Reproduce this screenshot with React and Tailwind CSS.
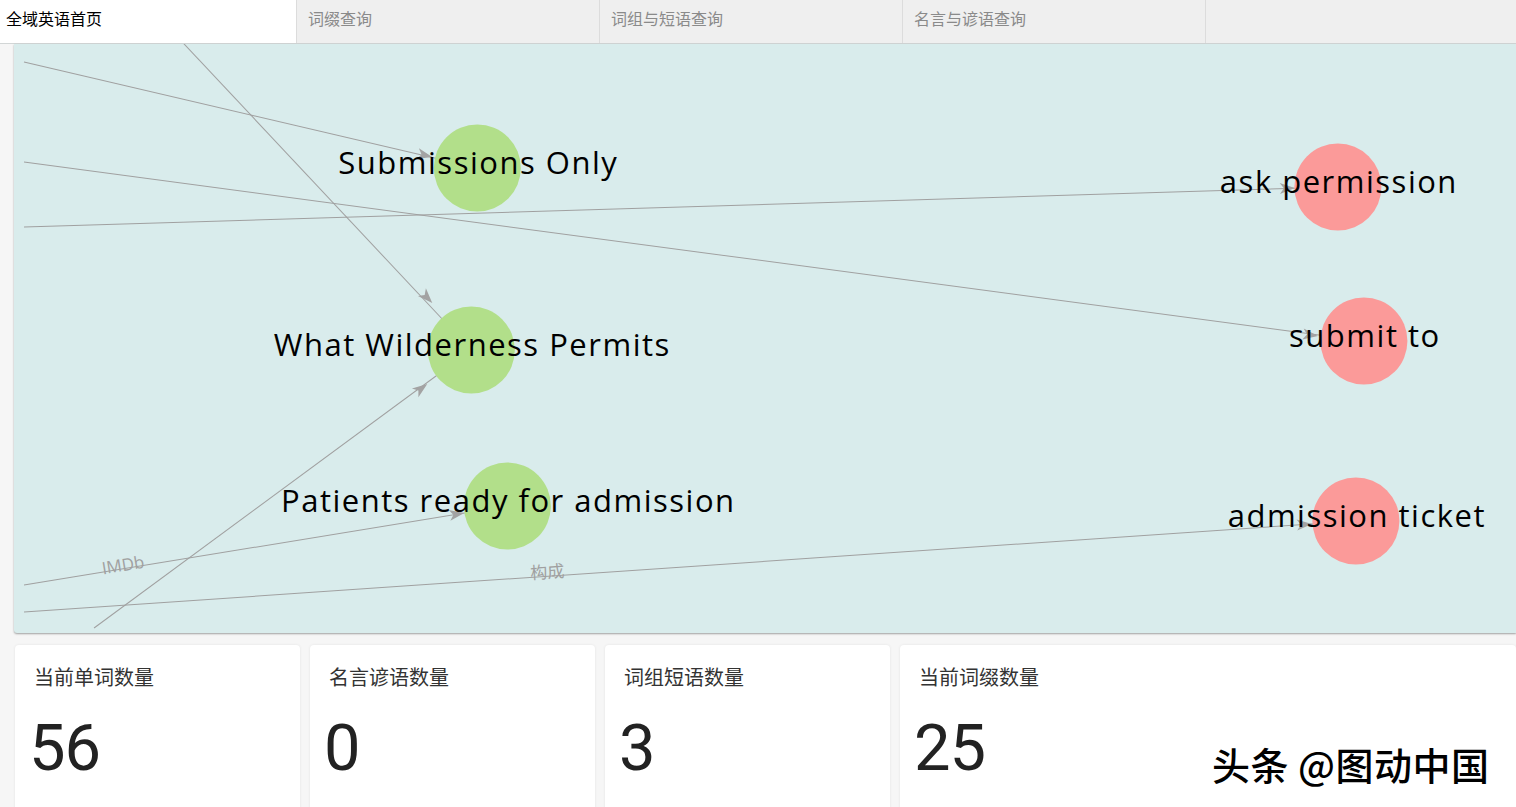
import React from 'react';

const tabs = ['全域英语首页', '词缀查询', '词组与短语查询', '名言与谚语查询'];

const nodes = [
    {label: 'Submissions Only', cx: 478, cy: 168, ty: 174, fill: '#b2df8a'},
    {label: 'What Wilderness Permits', cx: 472, cy: 350, ty: 356, fill: '#b2df8a'},
    {label: 'Patients ready for admission', cx: 508, cy: 506, ty: 512, fill: '#b2df8a'},
    {label: 'ask permission', cx: 1338, cy: 187, ty: 193, fill: '#fb9a99'},
    {label: 'submit to', cx: 1364, cy: 341, ty: 347, fill: '#fb9a99'},
    {label: 'admission ticket', cx: 1356, cy: 521, ty: 527, fill: '#fb9a99'},
];

// from -> arrow tip, line runs on to the node centre (hidden under the circle)
const edges = [
    {x1: 25, y1: 62, tx: 433, ty: 157, cx: 478, cy: 168},
    {x1: 140, y1: -4, tx: 433, ty: 303, cx: 472, cy: 350},
    {x1: 25, y1: 162, tx: 1318, ty: 336, cx: 1364, cy: 341},
    {x1: 25, y1: 227, tx: 1295, ty: 188, cx: 1338, cy: 187},
    {x1: 95, y1: 628, tx: 428, ty: 384, cx: 472, cy: 350},
    {x1: 25, y1: 585, tx: 465, ty: 513, cx: 508, cy: 506},
    {x1: 25, y1: 612, tx: 1312, ty: 524, cx: 1356, cy: 521},
];

const stats = [
    {title: '当前单词数量', value: '56'},
    {title: '名言谚语数量', value: '0'},
    {title: '词组短语数量', value: '3'},
    {title: '当前词缀数量', value: '25'},
];

const Arrow = ({edge}) => {
    const angle = Math.atan2(edge.ty - edge.y1, edge.tx - edge.x1) * 180 / Math.PI;
    return (
        <polygon
            points="0,0 -15,-5.5 -11,0 -15,5.5"
            fill="#a3a3a3"
            transform={`translate(${edge.tx} ${edge.ty}) rotate(${angle})`}
        />
    );
};

const Graph = () => (
    <svg className="w-full h-full block" viewBox="15 44 1501 589" preserveAspectRatio="none">
        {edges.map((e, i) => (
            <line key={i} x1={e.x1} y1={e.y1} x2={e.cx} y2={e.cy} stroke="#a0a0a0" strokeWidth="1" />
        ))}
        {edges.map((e, i) => <Arrow key={i} edge={e} />)}
        <text x="124" y="571" fill="#a0a0a0" fontSize="17" textAnchor="middle"
              fontFamily="'Open Sans', 'Noto Sans CJK SC', sans-serif"
              transform="rotate(-9.3 124 565)">IMDb</text>
        <text x="548" y="578" fill="#a0a0a0" fontSize="17" textAnchor="middle"
              fontFamily="'Noto Sans CJK SC', sans-serif"
              transform="rotate(-3.9 548 571)">构成</text>
        {nodes.map((n) => (
            <circle key={n.label} cx={n.cx} cy={n.cy} r="43.5" fill={n.fill} />
        ))}
        {nodes.map((n) => (
            <text key={n.label} x={n.cx + 1} y={n.ty} textAnchor="middle" fontSize="31" fill="#000"
                  letterSpacing="1.5" fontFamily="'Open Sans', sans-serif">{n.label}</text>
        ))}
    </svg>
);

export default function App() {
    return (
        <div className="relative h-[807px] overflow-hidden bg-[#f6f6f6] font-['Noto_Sans_CJK_SC',sans-serif]">
            <div className="flex h-[44px] bg-[#efefef] border-b border-[#d2d6d6]">
                {tabs.map((t, i) => (
                    <div
                        key={t}
                        className={i === 0
                            ? 'w-[297px] bg-white pl-[6px] pt-[7px] text-[16px] leading-[22px] text-black border-r border-[#dcdcdc]'
                            : 'w-[303px] pl-[11px] pt-[7px] text-[16px] leading-[22px] text-[#8a8a8a] border-r border-[#dcdcdc]'}
                    >
                        {t}
                    </div>
                ))}
            </div>

            <div className="pl-[14px]">
                <div className="h-[589px] bg-[#d9ecec] rounded-bl-[3px] shadow-[0_1px_2px_rgba(0,0,0,0.35)] overflow-hidden">
                    <Graph />
                </div>
            </div>

            <div className="flex gap-[10px] pl-[15px] mt-[12px]">
                {stats.map((s, i) => (
                    <div
                        key={s.title}
                        className={`${i === 3 ? 'flex-1' : 'w-[285px]'} h-[200px] bg-white rounded-[4px] shadow-[0_0_3px_rgba(0,0,0,0.08)] pl-[19px] pt-[20px]`}
                    >
                        <div className="text-[20px] leading-[24px] text-[#333]">{s.title}</div>
                        <div className="mt-[27px] font-['Roboto',sans-serif] text-[65px] leading-none text-[#222] -ml-[5px] tracking-[-1px]">
                            {s.value}
                        </div>
                    </div>
                ))}
            </div>

            <div
                className="absolute left-[1212px] top-[739px] text-[38px] leading-[50px] font-medium text-black font-['Noto_Sans_CJK_SC',sans-serif] tracking-[0.5px] [text-shadow:1px_1px_0_#fff,-1px_-1px_0_#fff,1px_-1px_0_#fff,-1px_1px_0_#fff,2px_2px_1px_#fff]"
            >
                头条 @图动中国
            </div>
        </div>
    );
}
